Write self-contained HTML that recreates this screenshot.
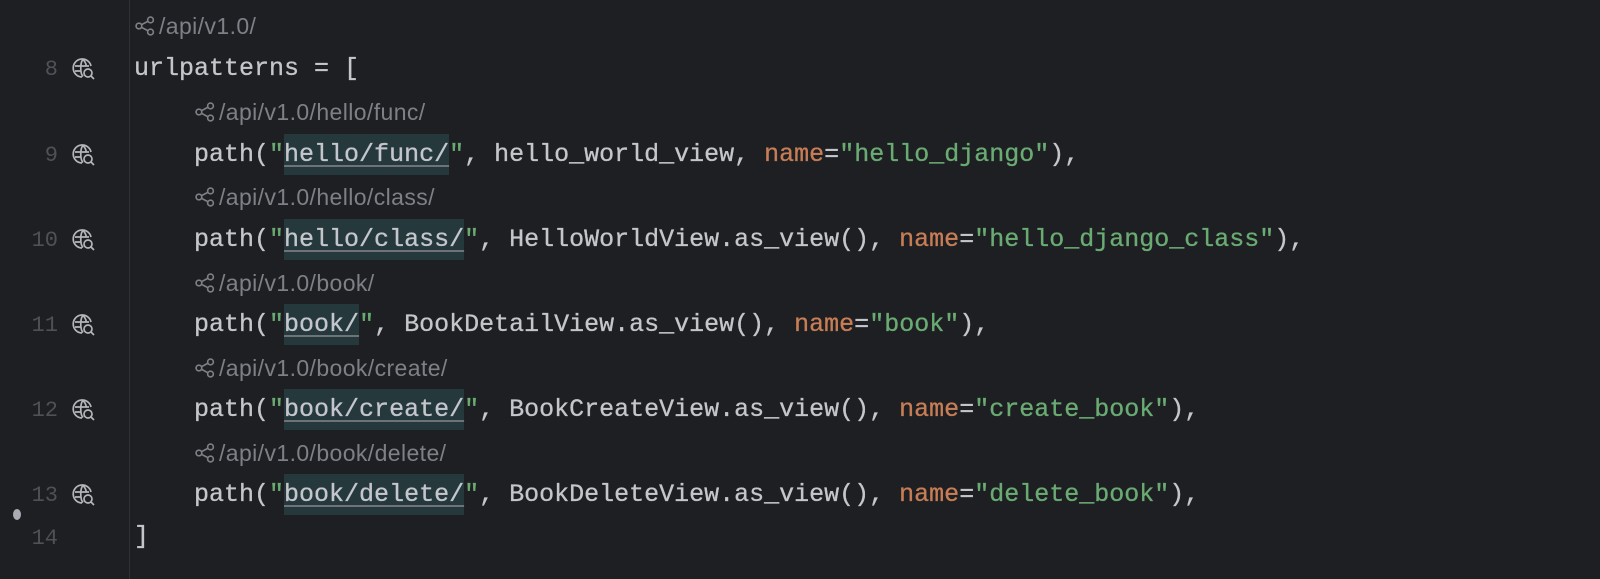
<!DOCTYPE html>
<html><head><meta charset="utf-8"><style>
html,body{margin:0;padding:0;background:#1e1f22;width:1600px;height:579px;overflow:hidden}
.sep{position:absolute;left:129px;top:0;width:1px;height:579px;background:#2f3135}
.ln{position:absolute;left:0;width:58px;text-align:right;font:22px "Liberation Mono",monospace;color:#4e5157}
.code{position:absolute;left:134px;font:25px "Liberation Mono",monospace;color:#c4c6cc;white-space:pre;line-height:30px;-webkit-text-stroke:0.3px #c4c6cc}
.code .s{-webkit-text-stroke:0.3px #6aab73}.code .k{-webkit-text-stroke:0.3px #c77d55}
.hint{position:absolute;font:23px "Liberation Sans",sans-serif;color:#7d8087;white-space:pre;line-height:26px;letter-spacing:0.4px}
.s{color:#6aab73}.k{color:#c77d55}
.u{background:#25393d;color:#c4c6cc;text-decoration:underline;text-decoration-color:#6f7378;text-underline-offset:4px;padding:6px 0}
.g{position:absolute;left:72px;width:24px;height:24px}
</style></head><body>
<div class="sep"></div>
<svg width="0" height="0" style="position:absolute"><defs>
<symbol id="glob" viewBox="0 0 24 24"><g fill="none" stroke="#b4b6bb" stroke-width="1.7"><path d="M19 9A9 9 0 1 0 10 20"/><path d="M3 9h14M3 14h6M11 2.5c-3 3-3 14 0 17M11 2.5c2 2 3 4 3.3 6.5"/><circle cx="16" cy="16" r="4"/><path d="M19 19l3 3"/></g></symbol>
<symbol id="sh" viewBox="0 0 20 20"><g fill="none" stroke="#7d8087" stroke-width="1.5"><circle cx="4.5" cy="10" r="2.6"/><circle cx="15" cy="4.5" r="2.6"/><circle cx="15" cy="15.5" r="2.6"/><path d="M6.8 8.8l5.9-3.1M6.8 11.2l5.9 3.1"/></g></symbol>
</defs></svg>

<div class="hint" style="left:134px;top:13px"><svg width="22" height="22" style="vertical-align:-3px;margin-right:3px"><use href="#sh"/></svg>/api/v1.0/</div>
<div class="ln" style="top:57px">8</div><svg class="g" style="top:57px"><use href="#glob"/></svg>
<div class="code" style="top:54px">urlpatterns = [</div>

<div class="hint" style="left:194px;top:99px"><svg width="22" height="22" style="vertical-align:-3px;margin-right:3px"><use href="#sh"/></svg>/api/v1.0/hello/func/</div>
<div class="ln" style="top:143px">9</div><svg class="g" style="top:143px"><use href="#glob"/></svg>
<div class="code" style="top:140px">    path(<span class="s">"</span><span class="u">hello/func/</span><span class="s">"</span>, hello_world_view, <span class="k">name</span>=<span class="s">"hello_django"</span>),</div>

<div class="hint" style="left:194px;top:184px"><svg width="22" height="22" style="vertical-align:-3px;margin-right:3px"><use href="#sh"/></svg>/api/v1.0/hello/class/</div>
<div class="ln" style="top:228px">10</div><svg class="g" style="top:228px"><use href="#glob"/></svg>
<div class="code" style="top:225px">    path(<span class="s">"</span><span class="u">hello/class/</span><span class="s">"</span>, HelloWorldView.as_view(), <span class="k">name</span>=<span class="s">"hello_django_class"</span>),</div>

<div class="hint" style="left:194px;top:270px"><svg width="22" height="22" style="vertical-align:-3px;margin-right:3px"><use href="#sh"/></svg>/api/v1.0/book/</div>
<div class="ln" style="top:313px">11</div><svg class="g" style="top:313px"><use href="#glob"/></svg>
<div class="code" style="top:310px">    path(<span class="s">"</span><span class="u">book/</span><span class="s">"</span>, BookDetailView.as_view(), <span class="k">name</span>=<span class="s">"book"</span>),</div>

<div class="hint" style="left:194px;top:355px"><svg width="22" height="22" style="vertical-align:-3px;margin-right:3px"><use href="#sh"/></svg>/api/v1.0/book/create/</div>
<div class="ln" style="top:398px">12</div><svg class="g" style="top:398px"><use href="#glob"/></svg>
<div class="code" style="top:395px">    path(<span class="s">"</span><span class="u">book/create/</span><span class="s">"</span>, BookCreateView.as_view(), <span class="k">name</span>=<span class="s">"create_book"</span>),</div>

<div class="hint" style="left:194px;top:440px"><svg width="22" height="22" style="vertical-align:-3px;margin-right:3px"><use href="#sh"/></svg>/api/v1.0/book/delete/</div>
<div class="ln" style="top:483px">13</div><svg class="g" style="top:483px"><use href="#glob"/></svg>
<div class="code" style="top:480px">    path(<span class="s">"</span><span class="u">book/delete/</span><span class="s">"</span>, BookDeleteView.as_view(), <span class="k">name</span>=<span class="s">"delete_book"</span>),</div>

<div style="position:absolute;left:13px;top:509px;width:8px;height:11px;border-radius:50%;background:#a9acb2"></div>
<div class="ln" style="top:526px">14</div>
<div class="code" style="top:522px">]</div>
</body></html>
